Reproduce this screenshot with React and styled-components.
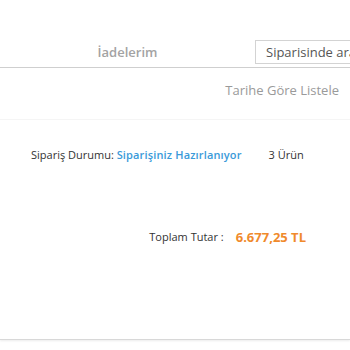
import React from 'react';
import styled, { createGlobalStyle } from 'styled-components';

const GlobalStyle = createGlobalStyle`
    html, body {
        margin: 0;
        padding: 0;
        background: #ffffff;
        overflow: hidden;
    }
    body {
        font-family: "Open Sans", "Liberation Sans", sans-serif;
    }
`

export default function App() {
    const order = {
        status: 'Siparişiniz Hazırlanıyor',
        count: '3 Ürün',
        total: '6.677,25 TL'
    }
    return (
        <Page>
            <GlobalStyle />
            <TabBar>
                <TabSlot>İadelerim</TabSlot>
                <SearchBox placeholder="Siparisinde ara" />
            </TabBar>
            <SortRow>
                <SortLink>Tarihe Göre Listele</SortLink>
            </SortRow>
            <OrderCard>
                <StatusRow>
                    <StatusText>
                        Sipariş Durumu: <StatusValue>{order.status}</StatusValue>
                    </StatusText>
                    <Count>{order.count}</Count>
                </StatusRow>
                <TotalRow>
                    <TotalLabel>Toplam Tutar :</TotalLabel>
                    <TotalValue>{order.total}</TotalValue>
                </TotalRow>
            </OrderCard>
        </Page>
    )
}

const Page = styled.div`
    width: 350px;
    height: 350px;
    overflow: hidden;
`
const TabBar = styled.div`
    display: flex;
    align-items: center;
    height: 68px;
    box-sizing: border-box;
    padding-top: 36px;
    border-bottom: 1px solid #cfcfcf;
`
const TabSlot = styled.div`
    flex: 0 0 255px;
    text-align: center;
    font-size: 13px;
    font-weight: 600;
    color: #a3a3a3;
`
const SearchBox = styled.input`
    flex: 0 0 130px;
    height: 24px;
    box-sizing: border-box;
    border: 1px solid #d3d3d3;
    padding: 0 10px;
    font-family: "Open Sans", "Liberation Sans", sans-serif;
    font-size: 13px;
    color: #555;
    outline: none;
    &::placeholder {
        color: #555;
    }
`
const SortRow = styled.div`
    display: flex;
    justify-content: flex-end;
    height: 52px;
    box-sizing: border-box;
    padding: 13px 11px 0 0;
    border-bottom: 1px solid #f6f6f6;
`
const SortLink = styled.div`
    font-size: 13px;
    line-height: 18px;
    color: #9a9a9a;
`
const OrderCard = styled.div`
    height: 220px;
    box-sizing: border-box;
    border-bottom: 1px solid #d8d8d8;
    box-shadow: 0 1px 2px rgba(0, 0, 0, 0.08);
`
const StatusRow = styled.div`
    display: flex;
    align-items: center;
    padding: 27px 0 0 31px;
    font-size: 11px;
    line-height: 16px;
    color: #333;
`
const StatusText = styled.div``
const StatusValue = styled.span`
    color: #3a9ad9;
    font-weight: 600;
    letter-spacing: 0.15px;
`
const Count = styled.div`
    margin-left: 27px;
`
const TotalRow = styled.div`
    display: flex;
    justify-content: flex-end;
    align-items: center;
    gap: 12px;
    margin-top: 65px;
    padding-right: 44px;
    line-height: 18px;
`
const TotalLabel = styled.div`
    font-size: 11px;
    color: #333;
`
const TotalValue = styled.div`
    font-size: 13px;
    font-weight: 700;
    color: #f08a2c;
`
